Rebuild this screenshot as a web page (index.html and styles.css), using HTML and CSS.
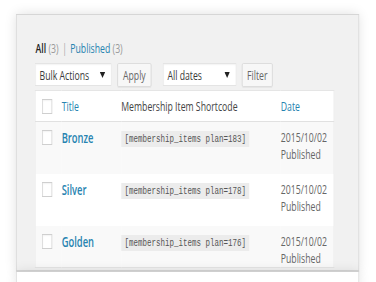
FILE: index.html
```html
<!DOCTYPE html>
<html>
<head>
<meta charset="utf-8">
<link rel="stylesheet" href="styles.css">
</head>
<body>
<div class="viewport">
<div class="stage">
  <div class="frame">
    <ul class="subsubsub">
      <li><span class="current">All</span> <span class="count">(3)</span> <span class="sep">|</span></li>
      <li><a href="#">Published</a> <span class="count">(3)</span></li>
    </ul>
    <div class="tablenav">
      <div class="select wide">
        <span>Bulk Actions</span>
        <svg class="arrow" width="8" height="6" viewBox="0 0 8 6"><path d="M0 0h8L4 6z" fill="#222"/></svg>
      </div>
      <button class="button">Apply</button>
      <div class="select dates">
        <span>All dates</span>
        <svg class="arrow" width="8" height="6" viewBox="0 0 8 6"><path d="M0 0h8L4 6z" fill="#222"/></svg>
      </div>
      <button class="button filter">Filter</button>
    </div>
    <table class="list">
      <thead>
        <tr>
          <th class="cb"><span class="check"></span></th>
          <th class="title"><a href="#">Title</a></th>
          <th class="code-col">Membership Item Shortcode</th>
          <th class="date"><a href="#">Date</a></th>
        </tr>
      </thead>
      <tbody>
        <tr class="alt">
          <td class="cb"><span class="check"></span></td>
          <td class="title"><a href="#" class="row-title">Bronze</a></td>
          <td class="code-col"><code>[membership_items plan=183]</code></td>
          <td class="date">2015/10/02<br>Published</td>
        </tr>
        <tr>
          <td class="cb"><span class="check"></span></td>
          <td class="title"><a href="#" class="row-title">Silver</a></td>
          <td class="code-col"><code>[membership_items plan=178]</code></td>
          <td class="date">2015/10/02<br>Published</td>
        </tr>
        <tr class="alt last">
          <td class="cb"><span class="check"></span></td>
          <td class="title"><a href="#" class="row-title">Golden</a></td>
          <td class="code-col"><code>[membership_items plan=176]</code></td>
          <td class="date">2015/10/02<br>Published</td>
        </tr>
      </tbody>
    </table>
  </div>
  <div class="next"></div>
</div>
</div>
</body>
</html>
```

FILE: styles.css
```css
html, body {
  margin: 0;
  padding: 0;
  background: #ffffff;
  overflow: hidden;
}

body {
  font-family: "Open Sans", "Noto Sans", sans-serif;
  font-size: 13px;
  color: #444;
}

.viewport {
  width: 376px;
  height: 282px;
  overflow: hidden;
}

.stage {
  width: 561px;
  height: 282px;
  padding-top: 14px;
  box-sizing: border-box;
  transform: scaleX(0.67);
  transform-origin: 0 0;
}

.frame {
  margin-left: 24px;
  width: 512px;
  height: 257px;
  box-sizing: border-box;
  background: #f1f1f1;
  border: 1px solid #d6d6d6;
  box-shadow: 0 0 14px rgba(0, 0, 0, 0.13);
  padding: 25px 0 0 27px;
  overflow: hidden;
}

.next {
  margin-left: 24px;
  width: 512px;
  height: 20px;
  box-sizing: border-box;
  background: #ffffff;
  border: 1px solid #d6d6d6;
  border-top-color: #cfcfcf;
  box-shadow: 0 0 14px rgba(0, 0, 0, 0.1);
}

a {
  color: #2683b0;
  text-decoration: none;
}

.subsubsub {
  list-style: none;
  margin: 0;
  padding: 0 0 0 1px;
  display: flex;
  gap: 5px;
  line-height: 17px;
  height: 17px;
  color: #666;
}

.subsubsub .current {
  color: #222;
  font-weight: 600;
}

.subsubsub .count {
  color: #999;
}

.subsubsub .sep {
  color: #aaa;
  margin-left: 2px;
}

.tablenav {
  display: flex;
  align-items: center;
  margin-top: 6px;
  height: 23px;
}

.select {
  height: 23px;
  box-sizing: border-box;
  background: #fff;
  border: 1px solid #e4e4e4;
  box-shadow: inset 0 1px 2px rgba(0, 0, 0, 0.05);
  display: flex;
  align-items: center;
  justify-content: space-between;
  padding: 0 9px 0 6px;
  color: #3a3a3a;
  font-size: 13px;
}

.select.wide {
  width: 115px;
}

.select.dates {
  width: 110px;
  margin-left: 17px;
}

.arrow {
  display: block;
}

.button {
  margin-left: 8px;
  height: 24px;
  width: 51px;
  box-sizing: border-box;
  background: #f7f7f7;
  border: 1px solid #d8d8d8;
  border-radius: 2px;
  box-shadow: 0 1px 0 #e6e6e6;
  font-family: inherit;
  font-size: 13px;
  color: #666;
  padding: 0;
}

.button.filter {
  width: 46px;
}

.list {
  margin-top: 4px;
  width: 445px;
  border-collapse: collapse;
  background: #fff;
  border: 1px solid #e5e5e5;
  table-layout: fixed;
}

.list th,
.list td {
  padding: 0;
  text-align: left;
  font-weight: normal;
}

.list thead th {
  height: 30px;
  border-bottom: 1px solid #e1e1e1;
  vertical-align: middle;
  color: #444;
  font-size: 13px;
}

.list th.cb, .list td.cb { width: 39px; }
.list th.title, .list td.title { width: 89px; }
.list th.code-col, .list td.code-col { width: 238px; }
.list th.date, .list td.date { width: 79px; }

.check {
  display: block;
  width: 15px;
  height: 15px;
  box-sizing: border-box;
  margin-left: 10px;
  border: 1px solid #cfcfcf;
  background: #fff;
  box-shadow: inset 0 1px 2px rgba(0, 0, 0, 0.05);
}

.list tbody tr {
  height: 52px;
}

.list tbody tr.alt {
  background: #f9f9f9;
}

.list tbody tr.last {
  height: 42px;
}

.list tbody td {
  vertical-align: top;
  padding-top: 7px;
  line-height: 17px;
}

.list tbody td.cb {
  padding-top: 8px;
}

.row-title {
  font-size: 14px;
  font-weight: 600;
}

code {
  display: inline-block;
  font-family: "Liberation Mono", "DejaVu Sans Mono", monospace;
  font-size: 11.2px;
  line-height: 14px;
  padding: 1px 5px 1px 5px;
  background: #ececec;
  color: #555;
}

.list td.date {
  color: #666;
  font-size: 13px;
}
```
